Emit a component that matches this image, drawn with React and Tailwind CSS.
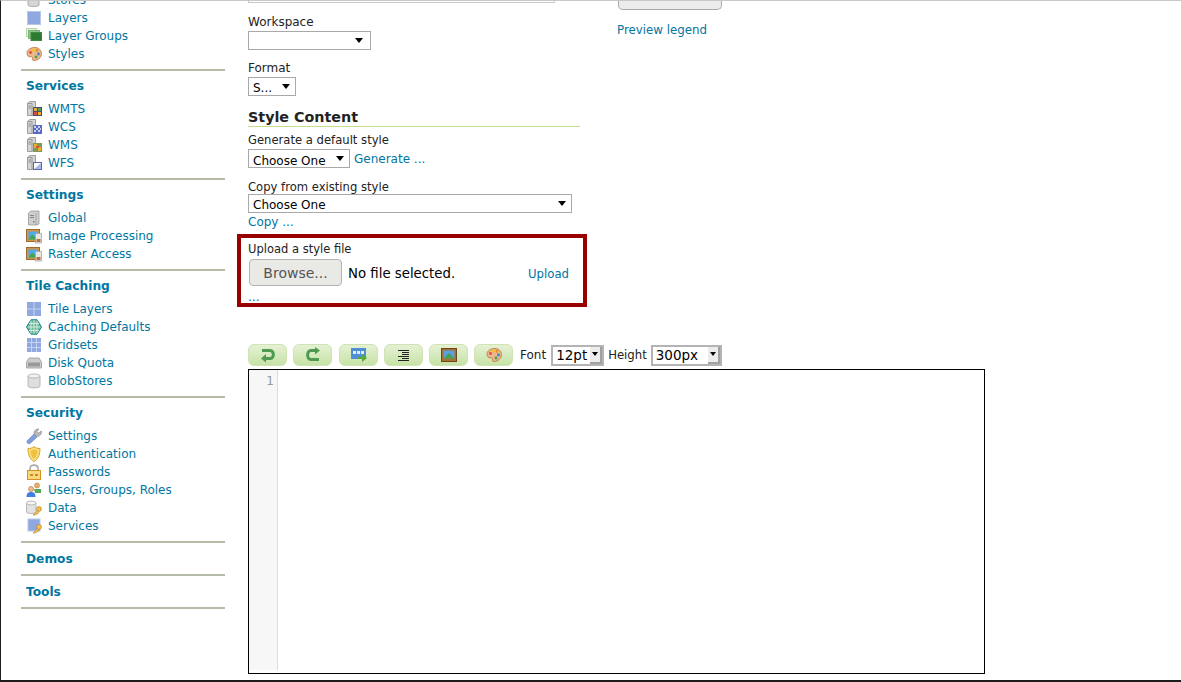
import React from "react";

const Palette = ({ className = "" }) => (
    <svg width="16" height="16" viewBox="0 0 16 16" className={className}>
        <path d="M1 7C1 3.5 5 1.5 9 1.5C13 1.5 15.5 4.5 15.5 7.5C15.5 11.500 12 14.500 8 14.500C6.500 14.500 6 13.500 6.500 12.500C7 11 5.500 10.500 4 10.800C2.500 11 1 9.500 1 7Z" fill="#e9b98c" stroke="#b5713f" strokeWidth="0.8" />
        <circle cx="4.500" cy="6.500" r="1.400" fill="#e8483a" />
        <circle cx="7.500" cy="4" r="1.400" fill="#f5c518" />
        <circle cx="11" cy="4.500" r="1.400" fill="#e8902a" />
        <circle cx="12.500" cy="8" r="1.400" fill="#3f7fd0" />
        <circle cx="10" cy="11" r="1.400" fill="#4aa04a" />
    </svg>
);

const Server = ({ children }) => (
    <svg width="16" height="16" viewBox="0 0 16 16">
        <path d="M1.500 2.500L4 0.500H9.500V12L6 14.500H1.500Z" fill="#d4d4d4" stroke="#8a8a8a" strokeWidth="0.8" />
        <path d="M1.500 2.500H6V14.500" fill="none" stroke="#8a8a8a" strokeWidth="0.8" />
        <rect x="2.500" y="4.500" width="2.500" height="1" fill="#8a8a8a" />
        <rect x="2.500" y="6.500" width="2.500" height="1" fill="#8a8a8a" />
        {children}
    </svg>
);

const Key = () => (
    <g>
        <circle cx="13" cy="9" r="2.400" fill="#f2c14e" stroke="#b5851f" strokeWidth="0.7" />
        <path d="M11.500 10.500L7 15H9.500L10.500 14L11.500 14L13 12Z" fill="#f2c14e" stroke="#b5851f" strokeWidth="0.6" />
    </g>
);

const Picture = () => (
    <svg width="16" height="16" viewBox="0 0 16 16">
        <rect x="0.500" y="1.500" width="13" height="12" fill="#cf9450" stroke="#a06a2c" />
        <rect x="2.500" y="3.500" width="9" height="8" fill="#4fa8e8" />
        <path d="M2.500 11.500L6 6.500L11.500 11.500Z" fill="#3fa84a" />
        <rect x="9.500" y="5.500" width="6" height="9.500" fill="#e6e6e6" stroke="#a0a0a0" strokeWidth="0.7" />
        <rect x="10.500" y="11" width="4" height="3" fill="#b5713f" />
    </svg>
);

const icons = {
    stores: (
        <svg width="16" height="16" viewBox="0 0 16 16">
            <path d="M2 3V13C2 15 13 15 13 13V3Z" fill="#d6d6d6" stroke="#999" strokeWidth="0.8" />
            <ellipse cx="7.500" cy="3" rx="5.500" ry="2" fill="#eee" stroke="#999" strokeWidth="0.8" />
        </svg>
    ),
    layers: (
        <svg width="16" height="16" viewBox="0 0 16 16">
            <rect x="1.500" y="1.500" width="13" height="13" fill="#8fa9e0" stroke="#b9c8e8" />
        </svg>
    ),
    groups: (
        <svg width="16" height="16" viewBox="0 0 16 16">
            <rect x="0.500" y="0.500" width="10" height="8" fill="#e4f2dc" stroke="#b4d8a4" />
            <rect x="2.500" y="2.500" width="11" height="8" fill="#8fc48a" stroke="#7cb077" />
            <rect x="5" y="4.500" width="11" height="8" fill="#2f7a32" stroke="#3f8a42" />
        </svg>
    ),
    styles: <Palette />,
    wmts: (
        <Server>
            <rect x="7" y="6" width="9" height="9" fill="#4a4a70" />
            <rect x="8" y="7" width="3" height="3" fill="#e8b030" />
            <rect x="12" y="7" width="3" height="3" fill="#58a058" />
            <rect x="8" y="11" width="3" height="3" fill="#d85040" />
            <rect x="12" y="11" width="3" height="3" fill="#e8b030" />
        </Server>
    ),
    wcs: (
        <Server>
            <rect x="7" y="6" width="9" height="9" fill="#5a68c8" />
            <path d="M8 7h2v2H8zM12 7h2v2h-2zM10 9h2v2h-2zM14 9h1v2h-1zM8 11h2v2H8zM12 11h2v2h-2z" fill="#c8d0f0" />
        </Server>
    ),
    wms: (
        <Server>
            <rect x="7" y="6" width="9" height="9" fill="#7c9a50" />
            <path d="M8 7h3v4H8zM12 10h3v4h-3z" fill="#e8b030" />
            <path d="M10 9h3v2h-3z" fill="#d85040" />
        </Server>
    ),
    wfs: (
        <Server>
            <rect x="7.500" y="7.500" width="8" height="7" fill="#fff" stroke="#5a68a8" />
            <path d="M8 14L15 8V14Z" fill="#a8b8e8" />
        </Server>
    ),
    global: (
        <svg width="16" height="16" viewBox="0 0 16 16">
            <path d="M2.500 3L5 1H13V14L10 15H2.500Z" fill="#cfcfcf" stroke="#999" strokeWidth="0.8" />
            <path d="M10 3V15" stroke="#999" strokeWidth="0.8" />
            <path d="M4 5h4v1H4zM4 7h4v1H4z" fill="#888" />
            <rect x="7" y="11" width="1.500" height="1.500" fill="#4aa04a" />
        </svg>
    ),
    raster: <Picture />,
    tiles: (
        <svg width="16" height="16" viewBox="0 0 16 16">
            <rect x="1" y="1" width="14" height="14" fill="#8fa9e0" />
            <path d="M8 1V15M1 8H15" stroke="#c5d3f0" />
        </svg>
    ),
    caching: (
        <svg width="16" height="16" viewBox="0 0 16 16">
            <path d="M5 0.800H11L15.500 8L11 15.200H5L0.500 8Z" fill="#6fb898" stroke="#0a7f8c" />
            <path d="M8 1V15M1.500 8H14.500M5 1.500V14.500M11 1.500V14.500M3 4.500H13M3 11.500H13" stroke="#e8f5ec" strokeWidth="0.8" />
        </svg>
    ),
    grid: (
        <svg width="16" height="16" viewBox="0 0 16 16">
            <rect x="1" y="1" width="14" height="14" fill="#8fa9e0" />
            <path d="M5.500 1V15M10.500 1V15M1 5.500H15M1 10.500H15" stroke="#c5d3f0" />
        </svg>
    ),
    disk: (
        <svg width="16" height="16" viewBox="0 0 16 16">
            <path d="M3 3H13L15.500 7V13H0.500V7Z" fill="#ccc" stroke="#999" strokeWidth="0.8" />
            <rect x="2" y="7.500" width="12" height="4" fill="#999" />
        </svg>
    ),
    blob: (
        <svg width="16" height="16" viewBox="0 0 16 16">
            <path d="M2 3V13C2 15.500 14 15.500 14 13V3Z" fill="#dedede" stroke="#aaa" strokeWidth="0.8" />
            <ellipse cx="8" cy="3" rx="6" ry="2" fill="#f3f3f3" stroke="#aaa" strokeWidth="0.8" />
        </svg>
    ),
    wrench: (
        <svg width="16" height="16" viewBox="0 0 16 16">
            <path d="M1 13L8 6L11 9L4 15.500C2 16 0.500 15 1 13Z" fill="#7f9fdc" stroke="#6080c0" strokeWidth="0.6" />
            <path d="M8 6C7.500 3 10 0.500 13 1L11 3.500L12.500 5L15.500 3C16 6 13.500 9 10.500 8.500Z" fill="#b8b8b8" stroke="#888" strokeWidth="0.6" />
        </svg>
    ),
    shield: (
        <svg width="16" height="16" viewBox="0 0 16 16">
            <path d="M8 0.500C6.500 2 4.500 2.500 2 2.500C2 8 3.500 13 8 15.500C12.500 13 14 8 14 2.500C11.500 2.500 9.500 2 8 0.500Z" fill="#f8e080" stroke="#d8a020" />
            <path d="M8 3C6.500 4 5.500 4.500 4.500 4.500C4.500 8 5.500 11 8 13C10.500 11 11.500 8 11.500 4.500C10.500 4.500 9.500 4 8 3Z" fill="#f0c040" />
        </svg>
    ),
    lock: (
        <svg width="16" height="16" viewBox="0 0 16 16">
            <path d="M4 7V4.500C4 0 12 0 12 4.500V7" fill="none" stroke="#aaa" strokeWidth="1.600" />
            <rect x="1.500" y="6.500" width="13" height="9" fill="#f8d880" stroke="#d89020" />
            <path d="M4 10h3v2H4zM9 10h3v2H9z" fill="#c88a20" />
        </svg>
    ),
    users: (
        <svg width="16" height="16" viewBox="0 0 16 16">
            <circle cx="11" cy="3.500" r="2.500" fill="#e8b070" stroke="#a87030" strokeWidth="0.5" />
            <path d="M8 7H15V11H9Z" fill="#5aa85a" />
            <circle cx="5" cy="7" r="2.500" fill="#f0c090" stroke="#a8502a" strokeWidth="0.5" />
            <path d="M0.500 15C0.500 11 2.500 10 5 10C7.500 10 9.500 11 9.500 15Z" fill="#3f7fe0" />
        </svg>
    ),
    data: (
        <svg width="16" height="16" viewBox="0 0 16 16">
            <path d="M0.500 3V12C0.500 14 10 14 10 12V3Z" fill="#e2e2e2" stroke="#aaa" strokeWidth="0.8" />
            <ellipse cx="5.250" cy="3" rx="4.750" ry="2" fill="#f5f5f5" stroke="#aaa" strokeWidth="0.8" />
            <Key />
        </svg>
    ),
    service: (
        <svg width="16" height="16" viewBox="0 0 16 16">
            <rect x="2" y="1" width="12" height="12" fill="#8fa9e0" stroke="#b9c8e8" />
            <Key />
        </svg>
    ),
};

const NavRow = ({ label, icon }) => (
    <div className="flex h-[18px] items-center">
        <span className="w-[22px] shrink-0">{icons[icon]}</span>
        <a className="text-[#0076a1]">{label}</a>
    </div>
);

const Section = ({ title, items }) => (
    <div className={`border-b-2 border-[#b4bca8] pl-[5px] ${items ? "pb-[6px] pt-[7px]" : "pb-[7px] pt-[8px]"}`}>
        <h3 className={`text-[12.2px] leading-[16px] font-bold text-[#0076a1] ${items ? "mb-[6px]" : ""}`}>{title}</h3>
        {items && items.map(([label, icon]) => <NavRow key={label} label={label} icon={icon} />)}
    </div>
);

const Select = ({ className, value, arrow = "pr-[9px]", textClass = "" }) => (
    <div className={`flex items-center justify-between h-[19px] border border-[#a9a9a9] bg-white pl-[4px] text-black ${arrow} ${className}`}>
        <span className={textClass}>{value}</span>
        <span className="h-0 w-0 border-x-[4px] border-t-[5px] border-x-transparent border-t-black"></span>
    </div>
);

const SmallSelect = ({ className, value }) => (
    <div className={`flex items-stretch h-[21px] border-2 border-[#b4b4b4] bg-white pl-[3px] text-[13.5px] leading-[17px] text-black ${className}`}>
        <span className="flex-1">{value}</span>
        <span className="flex w-[12px] items-center justify-center border-r-2 border-b-2 border-[#a0a0a0] bg-[#ececec]">
            <span className="h-0 w-0 border-x-[3px] border-t-[4px] border-x-transparent border-t-black"></span>
        </span>
    </div>
);

const ToolButton = ({ children, className = "" }) => (
    <button className={`flex h-[22px] w-[39px] items-center justify-center rounded-[6px] border border-[#cfe3b4] bg-gradient-to-b from-[#e6f1d4] to-[#c6e3a6] ${className}`}>
        {children}
    </button>
);

const App = () => {
    return (
        <div className="flex h-[682px] w-[1181px] overflow-hidden border-t border-b-2 border-l border-t-[#c8c8c8] border-b-[#1c1c1c] border-l-[#1c1c1c] bg-white font-['DejaVu_Sans',sans-serif] text-[12px] leading-[18px] text-[#222]">
            <aside className="ml-[20px] mt-[-10px] w-[204px] shrink-0">
                <div className="border-b-2 border-[#b4bca8] pb-[6px] pl-[5px]">
                    <NavRow label="Stores" icon="stores" />
                    <NavRow label="Layers" icon="layers" />
                    <NavRow label="Layer Groups" icon="groups" />
                    <NavRow label="Styles" icon="styles" />
                </div>
                <Section title="Services" items={[["WMTS", "wmts"], ["WCS", "wcs"], ["WMS", "wms"], ["WFS", "wfs"]]} />
                <Section title="Settings" items={[["Global", "global"], ["Image Processing", "raster"], ["Raster Access", "raster"]]} />
                <Section title="Tile Caching" items={[["Tile Layers", "tiles"], ["Caching Defaults", "caching"], ["Gridsets", "grid"], ["Disk Quota", "disk"], ["BlobStores", "blob"]]} />
                <Section title="Security" items={[["Settings", "wrench"], ["Authentication", "shield"], ["Passwords", "lock"], ["Users, Groups, Roles", "users"], ["Data", "data"], ["Services", "service"]]} />
                <Section title="Demos" />
                <Section title="Tools" />
            </aside>

            <main className="ml-[23px] flex w-[737px] shrink-0 flex-col">
                <div className="flex">
                    <div className="w-[332px] shrink-0">
                        <div className="h-[2px] w-[307px] border-x border-b border-[#c8c8c8]"></div>
                        <div className="mt-[10px]">Workspace</div>
                        <Select className="w-[123px]" value="" arrow="pr-[7px]" />
                        <div className="mt-[9px]">Format</div>
                        <Select className="w-[48px]" value="S..." arrow="pr-[5px]" textClass="pt-[3px]" />
                        <h2 className="mt-[13px] border-b border-[#c5dc8f] text-[14.3px] leading-[17px] font-bold text-[#222]">Style Content</h2>
                        <div className="mt-[4px] text-[11.6px]">Generate a default style</div>
                        <div className="flex items-start">
                            <Select className="w-[102px]" value="Choose One" arrow="pr-[5px]" textClass="pt-[4px]" />
                            <a className="ml-[4px] mt-[1px] leading-[18px] text-[#0076a1]">Generate ...</a>
                        </div>
                        <div className="mt-[10px] mb-[-2px] text-[11.6px]">Copy from existing style</div>
                        <Select className="w-[324px]" value="Choose One" arrow="pr-[5px]" textClass="pt-[3px]" />
                        <a className="block leading-[18px] text-[#0076a1]">Copy ...</a>
                        <div className="mt-[3px] ml-[-11px] h-[73px] w-[350px] border-4 border-[#990000] pl-[7px] pt-[2px]">
                            <div className="text-[11.5px]">Upload a style file</div>
                            <div className="mt-[1px] flex items-center">
                                <button className="ml-[1px] h-[27px] w-[93px] rounded-[4px] border border-[#b4b4b4] bg-[#e9e9e6] text-[14px] text-[#555]">Browse...</button>
                                <span className="ml-[6px] mt-[2px] text-[13.3px] text-black">No file selected.</span>
                                <a className="ml-auto mr-[14px] mt-[3px] text-[11.7px] text-[#0076a1]">Upload</a>
                            </div>
                            <a className="mt-[2px] block leading-[18px] text-[#0076a1]">...</a>
                        </div>
                    </div>
                    <div className="ml-[37px]">
                        <button className="ml-[1px] block h-[9px] w-[104px] rounded-b-[5px] border border-t-0 border-[#a8a8a8] bg-[#ececec]"></button>
                        <a className="mt-[11px] block text-[11.8px] text-[#0076a1]">Preview legend</a>
                    </div>
                </div>

                <div className="mt-[37px] flex items-center">
                    <ToolButton>
                        <svg width="18" height="16" viewBox="0 0 18 16"><path d="M3 3.500H11C15.500 3.500 15.500 11.500 11 11.500H6" fill="none" stroke="#4d9a50" strokeWidth="3" /><path d="M7 7L2 11.500L7 15.500Z" fill="#4d9a50" /></svg>
                    </ToolButton>
                    <ToolButton className="ml-[6px]">
                        <svg width="18" height="16" viewBox="0 0 18 16"><path d="M12 3.500H7C2.500 3.500 2.500 12.500 7 12.500H15" fill="none" stroke="#4d9a50" strokeWidth="3" /><path d="M11 0L16 3.500L11 7.500Z" fill="#4d9a50" /></svg>
                    </ToolButton>
                    <ToolButton className="ml-[7px]">
                        <svg width="16" height="16" viewBox="0 0 16 16"><rect x="0" y="1" width="15" height="11" fill="#4f8ed8" /><path d="M2 4h3v3H2zM6 4h3v3H6zM10 4h3v3h-3z" fill="#e2ecf8" /><path d="M7 10h4V7l5 4-5 4v-3H7z" fill="#5aa83f" /></svg>
                    </ToolButton>
                    <ToolButton className="ml-[6px]">
                        <svg width="13" height="13" viewBox="0 0 13 13"><path d="M1 1.500H12M5 3.500H12M5 5.500H12M1 7.500H12M5 9.500H12M1 11.500H12" stroke="#222" /></svg>
                    </ToolButton>
                    <ToolButton className="ml-[6px]">
                        <svg width="16" height="14" viewBox="0 0 16 14"><rect x="0.500" y="0.500" width="15" height="13" fill="#a8702f" stroke="#704818" /><rect x="2.500" y="2.500" width="11" height="8" fill="#58a0e0" /><path d="M2.500 10.500L8 5L13.500 10.500Z" fill="#4aa04a" /></svg>
                    </ToolButton>
                    <ToolButton className="ml-[6px]">
                        <Palette />
                    </ToolButton>
                    <span className="ml-[7px]">Font</span>
                    <SmallSelect className="ml-[5px] w-[53px]" value="12pt" />
                    <span className="ml-[4px] text-[11.7px]">Height</span>
                    <SmallSelect className="ml-[4px] w-[71px]" value="300px" />
                </div>

                <div className="mt-[3px] flex h-[305px] w-[737px] border border-black">
                    <div className="h-[300px] w-[29px] border-r border-[#dddddd] bg-[#f7f7f7] pr-[3px] pt-[2px] text-right text-[#999]">1</div>
                </div>
            </main>
        </div>
    );
};

export default App;
